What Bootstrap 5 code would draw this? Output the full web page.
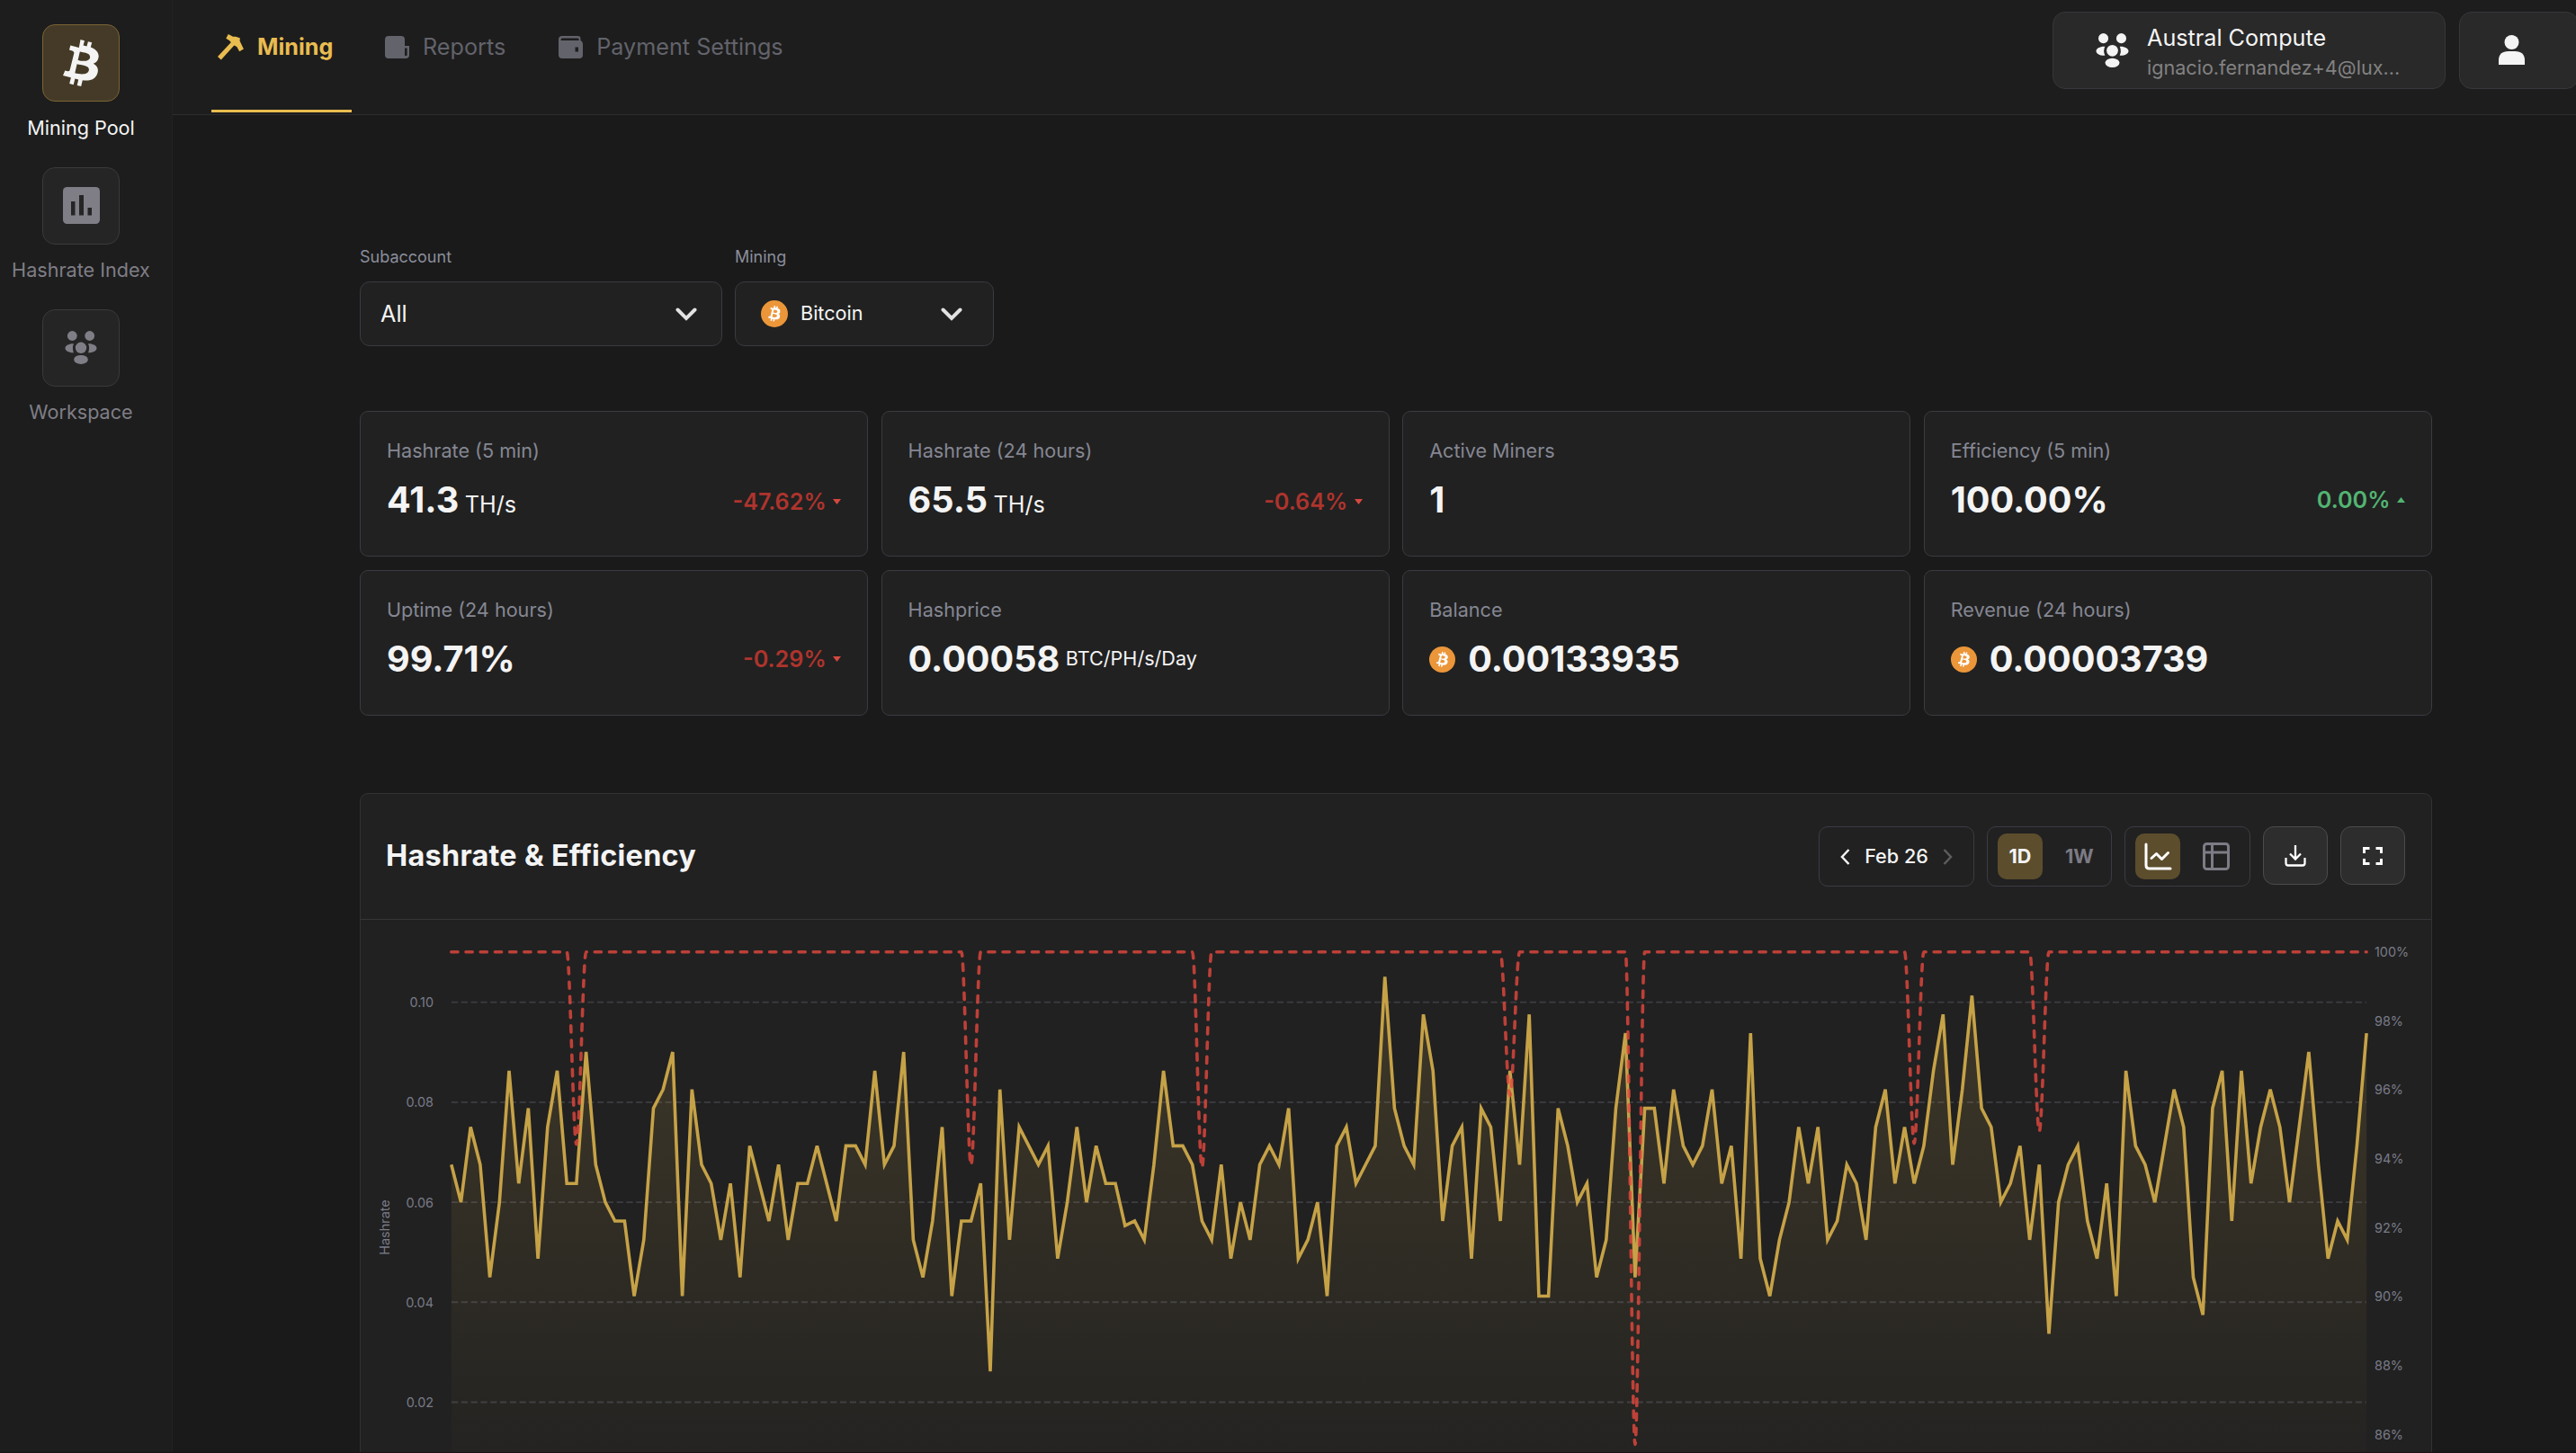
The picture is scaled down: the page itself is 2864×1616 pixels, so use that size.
<!DOCTYPE html>
<html lang="en" data-bs-theme="dark">
<head>
<meta charset="utf-8">
<title>Mining Pool</title>
<link href="https://cdn.jsdelivr.net/npm/bootstrap@5.3.0/dist/css/bootstrap.min.css" rel="stylesheet">
<style>
body{font-family:Inter,"Liberation Sans",sans-serif;background:#1a1a1a;color:#f4f4f4;width:2864px;height:1616px;overflow:hidden;font-size:21.6px;line-height:1.2}
body::after{content:"";position:absolute;left:0;right:0;top:1615px;height:1px;background:#1b1117}
svg{display:block;flex:none}
.rail{width:192px;height:1616px;background:#1d1d1d;border-right:1px solid #222224;padding-top:27.4px;flex:none}
.rail-item{width:180px;height:158.3px;color:#7f7e86;text-align:center;text-decoration:none;flex:none;white-space:nowrap}
.rail-tile{width:86px;height:86px;border:1px solid #3a3a3c;border-radius:14px;background:#252525;margin-bottom:16.5px}
.rail-item.active{color:#f4f4f4}
.rail-item.active .rail-tile{background:#443a27;border-color:#7b6434}
.topbar{height:128px;background:#1d1d1d;border-bottom:1px solid #2d2d2f}
.tabs-row{padding-left:43px}
.tab-link{color:#62636b;font-size:25.2px;height:125px;padding:0 22px 21px 37px;text-decoration:none;white-space:nowrap}
.tab-link svg{margin-right:15px}
.tab-link.active{color:#e9bc50;font-weight:700;border-bottom:3px solid #e9bc50;width:156px;padding:0 0 17px 7px}
.acct{background:#292929;border:1px solid #37373c;border-radius:14px;height:86px;margin-top:13px;flex:none}
.acct-team{width:437px;padding-left:47px;margin-right:15px}
.acct-user{width:133px;margin-right:-3px;padding:0 0 2px 43px}
.content-area{padding:147px 0 0 208px;width:2512px}
.flabel{font-size:18px;color:#8b8e9b;line-height:22px;margin-bottom:16px}
.pick-box{height:72px;background:#212121;border:1px solid #3a3a42;border-radius:10.8px}
.stat-grid{display:grid;grid-template-columns:repeat(4,1fr);column-gap:14.4px;row-gap:15px;margin-top:72px}
.stat{height:162px;background:#212121;border:1px solid #3a3a42;border-radius:9px;padding:30px 29px 0 29px}
.stat-name{color:#858793;line-height:27px;margin-bottom:17px}
.stat-val{font-size:39.6px;font-weight:700;line-height:48px}
.unit{font-size:25.2px}
.unit-gap{margin-left:6.5px}
.delta{font-size:25.2px;font-weight:600;color:#ae342d}
.delta svg{margin-left:7.5px}
.delta-up{color:#52b472}
.delta-drop{padding-top:4px}
.coin-gap{margin-right:14px}
.panel{margin-top:86px;background:#212121;border:1px solid #323234;border-radius:9px;height:740px}
.panel-head{height:140px;border-bottom:1px solid #363638;padding:36px 29px 0 28px}
.panel-title{font-size:32.4px;font-weight:700;line-height:66px;letter-spacing:.28px}
.seg{height:67px;border:1px solid #3c3b45;border-radius:10px;margin-right:14px}
.seg-on{background:#5c4d2d;border-radius:10px;width:50px;height:51px;flex:none}
.sq{width:72px;height:65px;border:1px solid #4b4b4b;border-radius:12px;background:#2d2d2d}
.axis{font-size:14.4px;fill:#797b88}
</style>
</head>
<body>
<svg width="0" height="0" class="position-absolute">
  <defs>
    <symbol id="btc" viewBox="0 0 40 53"><path fill="currentColor" fill-rule="evenodd" d="M19.5 0 24 1.200 22.600 6.400 26.500 7.400 27.900 2.200 32.200 3.200 30.800 8.600C36.500 10.800 40.300 14.500 39.600 19.500 39 23.500 37 25.800 33.800 26.800 38 29.200 39.800 32.500 38.500 37 36.800 43.800 30.500 46.500 21.800 45.300L20.200 52 15.700 51 17.200 44.400 13.400 43.500 11.700 50.200 7.200 49.100 8.900 42.200 0 40 2.300 34.500 5.400 35.200C6.800 35.500 7.400 34.800 7.700 33.800L12.300 15.300C12.500 13.900 12 12.900 10.300 12.400L7 11.500 8.300 6.500 17.800 8.900ZM18.800 13.600 16.600 22.900C21 24 28.800 25 30 20.200 31.200 15 23.200 14.700 18.800 13.600ZM15.600 27.300 13.300 37.300C18.500 38.600 27.500 39.900 28.800 34.300 30.100 28.900 20.800 28.500 15.600 27.300Z"/></symbol>
    <symbol id="coin" viewBox="0 0 29 29"><circle cx="14.500" cy="14.500" r="14.500" fill="#ec963a"/><svg x="7.600" y="5.600" width="13.500" height="17.500" viewBox="0 0 40 53" color="#fff"><use href="#btc"/></svg></symbol>
    <symbol id="team" viewBox="0 0 36 37"><g fill="currentColor"><circle cx="8.300" cy="5.500" r="5.400"/><circle cx="27.700" cy="5.500" r="5.400"/><circle cx="18" cy="18.800" r="6.200"/><ellipse cx="18" cy="31.900" rx="7.800" ry="5"/><path d="M10 14.300C4.500 14 .5 16.600.5 19.200S4 24.400 10 24.200Q7.800 19 10 14.300Z"/><path d="M26 14.300C31.500 14 35.500 16.600 35.500 19.200S32 24.400 26 24.200Q28.200 19 26 14.300Z"/></g></symbol>
  </defs>
</svg>
<div class="d-flex">
  <nav class="rail d-flex flex-column">
    <a class="rail-item active d-flex flex-column align-items-center"><span class="rail-tile d-flex align-items-center justify-content-center"><svg width="40" height="53"><use href="#btc"/></svg></span>Mining Pool</a>
    <a class="rail-item d-flex flex-column align-items-center"><span class="rail-tile d-flex align-items-center justify-content-center"><svg width="41" height="41"><rect width="41" height="41" rx="4.500" fill="currentColor"/><path d="M9 16h4.500v15.500H9zM18 9h5v22.500h-5zM27.500 23H32v8.500h-4.500z" fill="#252525"/></svg></span>Hashrate Index</a>
    <a class="rail-item d-flex flex-column align-items-center"><span class="rail-tile d-flex align-items-center justify-content-center"><svg width="36" height="37"><use href="#team"/></svg></span>Workspace</a>
  </nav>
  <div class="flex-grow-1">
    <header class="topbar d-flex">
      <div class="tabs-row d-flex">
        <a class="tab-link active d-flex align-items-center"><svg width="29" height="29" viewBox="0 0 29 29"><path fill="currentColor" d="M11.800 0 17 2.800C20 2.500 22 3.200 24.800 4.200L24.600 7.500 28.900 16.500 24.200 19.200 21.300 14 18.300 12.500 3.800 28.600 0 25 14.700 9.300C14 7.500 12.500 6.500 9.300 4.800Z"/></svg>Mining</a>
        <a class="tab-link d-flex align-items-center"><svg width="27" height="25" viewBox="0 0 27 25"><path fill="currentColor" fill-rule="evenodd" d="M4 0h14a4 4 0 0 1 4 4v7h5v10a4 4 0 0 1-4 4H4a4 4 0 0 1-4-4V4a4 4 0 0 1 4-4ZM22 13.500V21.500Q23 23 24.600 21.500V13.500Z"/></svg>Reports</a>
        <a class="tab-link d-flex align-items-center"><svg width="27" height="25" viewBox="0 0 27 25"><path fill="currentColor" fill-rule="evenodd" d="M4 0h17.500Q24.500 0 24.500 3V5Q27 6 27 8.500V21a4 4 0 0 1-4 4H4a4 4 0 0 1-4-4V4a4 4 0 0 1 4-4ZM3.500 2.500Q2.500 3.500 2.500 5H22.500V3.500Q22.500 2.500 21.500 2.500ZM18.500 12.500V17.500H22V12.500Z"/></svg>Payment Settings</a>
      </div>
      <div class="acct acct-team d-flex align-items-center ms-auto">
        <svg width="37" height="38" style="margin-right:20px"><use href="#team"/></svg>
        <div class="text-nowrap pt-1"><div style="font-size:25.2px;line-height:34px">Austral Compute</div><div style="color:#828282;line-height:33px">ignacio.fernandez+4@lux...</div></div>
      </div>
      <div class="acct acct-user d-flex align-items-center"><svg width="29" height="33" viewBox="0 0 29 33" fill="#f4f4f4"><circle cx="14.500" cy="8" r="8"/><path d="M0 33V28Q0 18 11 18H18Q29 18 29 28V33Z"/></svg></div>
    </header>
    <main class="content-area">
      <div class="d-flex" style="gap:14px">
        <div style="width:403px"><div class="flabel">Subaccount</div><div class="pick-box d-flex align-items-center justify-content-between" style="padding:0 27px 0 22px;font-size:25.2px">All<svg width="24" height="15" fill="none" stroke="#e2e2e2" stroke-width="4" stroke-linecap="round"><path d="m2.500 2.500 9.500 9.500 9.500-9.500"/></svg></div></div>
        <div style="width:288px"><div class="flabel">Mining</div><div class="pick-box d-flex align-items-center" style="padding:0 34px 0 28px"><svg width="30" height="30" class="coin-gap"><use href="#coin"/></svg>Bitcoin<svg class="ms-auto" width="24" height="15" fill="none" stroke="#e2e2e2" stroke-width="4" stroke-linecap="round"><path d="m2.500 2.500 9.500 9.500 9.500-9.500"/></svg></div></div>
      </div>
      <div class="stat-grid">
        <div class="stat"><div class="stat-name">Hashrate (5 min)</div><div class="d-flex align-items-center"><div class="d-flex align-items-baseline"><span class="stat-val">41.3</span><span class="unit unit-gap">TH/s</span></div><span class="delta delta-drop ms-auto d-flex align-items-center">-47.62%<svg width="9" height="6"><path d="M0 0h9L4.500 6z" fill="#d64840"/></svg></span></div></div>
        <div class="stat"><div class="stat-name">Hashrate (24 hours)</div><div class="d-flex align-items-center"><div class="d-flex align-items-baseline"><span class="stat-val">65.5</span><span class="unit unit-gap">TH/s</span></div><span class="delta delta-drop ms-auto d-flex align-items-center">-0.64%<svg width="9" height="6"><path d="M0 0h9L4.500 6z" fill="#d64840"/></svg></span></div></div>
        <div class="stat"><div class="stat-name">Active Miners</div><div class="stat-val">1</div></div>
        <div class="stat"><div class="stat-name">Efficiency (5 min)</div><div class="d-flex align-items-center"><span class="stat-val">100.00%</span><span class="delta delta-up ms-auto d-flex align-items-center">0.00%<svg width="9" height="6"><path d="M0 6h9L4.500 0z" fill="#52b472"/></svg></span></div></div>
        <div class="stat"><div class="stat-name">Uptime (24 hours)</div><div class="d-flex align-items-center"><span class="stat-val">99.71%</span><span class="delta ms-auto d-flex align-items-center">-0.29%<svg width="9" height="6"><path d="M0 0h9L4.500 6z" fill="#d64840"/></svg></span></div></div>
        <div class="stat"><div class="stat-name">Hashprice</div><div class="d-flex align-items-center"><span class="stat-val">0.00058</span><span class="unit-gap">BTC/PH/s/Day</span></div></div>
        <div class="stat"><div class="stat-name">Balance</div><div class="d-flex align-items-center"><svg width="29" height="29" class="coin-gap"><use href="#coin"/></svg><span class="stat-val">0.00133935</span></div></div>
        <div class="stat"><div class="stat-name">Revenue (24 hours)</div><div class="d-flex align-items-center"><svg width="29" height="29" class="coin-gap"><use href="#coin"/></svg><span class="stat-val">0.00003739</span></div></div>
      </div>
      <section class="panel">
        <div class="panel-head d-flex">
          <div class="panel-title me-auto">Hashrate &amp; Efficiency</div>
          <div class="seg d-flex align-items-center justify-content-between" style="width:173px;padding:0 23px;font-weight:500"><svg width="11" height="18" fill="none" stroke="#f4f4f4" stroke-width="2.500"><path d="M9.500 1 2 9l7.500 8"/></svg>Feb 26<svg width="11" height="18" fill="none" stroke="#5d5d60" stroke-width="2.500"><path d="m1.500 1 7.500 8-7.500 8"/></svg></div>
          <div class="seg d-flex align-items-center fw-bold" style="width:139px;padding-left:11px"><div class="seg-on d-flex align-items-center justify-content-center">1D</div><div style="padding-left:25px;color:#7d7b85">1W</div></div>
          <div class="seg d-flex align-items-center" style="width:140px;padding-left:11px"><div class="seg-on d-flex align-items-center justify-content-center"><svg width="31" height="31" fill="none" stroke="#fff" stroke-width="3" stroke-linecap="round" stroke-linejoin="round"><path d="M2 2V25.500Q2 29 5.500 29H29M8 17.500 13.500 12.500 19.500 18.500 26.500 11.500"/></svg></div><svg width="30" height="31" style="margin-left:25px" fill="none" stroke="#7d7b85" stroke-width="3"><rect x="1.500" y="1.500" width="27" height="28" rx="3"/><path d="M1.500 11H28.500M10.500 1.500V29.500"/></svg></div>
          <div class="sq d-flex align-items-center justify-content-center" style="margin-right:14px"><svg width="24" height="24" fill="none" stroke="#fff" stroke-width="2.300"><path d="M12 0V15M6 9.500 12 15.500 18 9.500M1.500 14V20Q1.500 22.500 4 22.500H20Q22.500 22.500 22.500 20V14"/></svg></div>
          <div class="sq d-flex align-items-center justify-content-center"><svg width="22" height="20" fill="none" stroke="#fff" stroke-width="3"><path d="M1.500 7V1.500H7.500M14.500 1.500H20.500V7M20.500 13V18.500H14.500M7.500 18.500H1.500V13"/></svg></div>
        </div>
        <svg id="plot" width="2302" height="593" viewBox="401 1023 2302 593">
          <defs><linearGradient id="fade" gradientUnits="userSpaceOnUse" x1="0" y1="1086" x2="0" y2="1671"><stop offset="0" stop-color="#e9bc50" stop-opacity=".15"/><stop offset="1" stop-color="#e9bc50" stop-opacity="0"/></linearGradient></defs>
        </svg>
      </section>
    </main>
  </div>
</div>
<script src="https://cdn.jsdelivr.net/npm/bootstrap@5.3.0/dist/js/bootstrap.bundle.min.js"></script>
<script>
// Hashrate samples in steps below the series maximum, one every interval of the day.
const steps = [10,12,8,10,16,12,5,11,7,15,8,5,11,11,4,10,12,13,13,17,14,7,6,4,17,6,10,11,14,11,16,9,11,13,10,14,11,11,9,11,13,9,9,10,5,10,9,
4,14,16,13,8,17,13,13,11,21,6,14,8,9,10,9,15,12,8,12,9,11,11,13.25,13,14,10,5,9,9,10,13,14,10,15,12,14,10,9,10,7,15,14,12,17,9,8,11,10,9,
0,7,9,10,2,5,13,9,8,15,7,8,13,5,10,2,17,17,7,9,12,11,16,14,7,3,16,7,7,11,6,9,10,9,6,11,9,15,3,15,17,14,12,8,11,8,14,13,10,11,14,8,6,
11,8,11,9,5,2,10,6,1,7,8,12,11,9,14,10,19,12,10,9,13,15,11,17,5,9,10,12,9,6,8,16,18,7,5,13,5,11,8,6,8,12,8,4,10,15,13,14,9,3];
// Efficiency dips: sample index -> percent.
const dips = {13:94.42,54:93.82,78:93.75,110:95.84,123:85.72,152:94.45,165:94.8};
const x0 = 501.8, dx = 10.7, X = i => x0 + i*dx;
const Y = s => 1086.4 + s*20.89, P = p => 1058.8 + (100-p)*38.35;
let out = '';
for (let k = 0; k < 5; k++) {
  const y = 1114.6 + k*111.22;
  out += `<path d="M502 ${y}H2631" stroke="#3c3c43" stroke-width="1.8" stroke-dasharray="7.2 3.6"/>`;
  out += `<text class="axis" x="482" y="${y+5.5}" text-anchor="end">${(0.10-k*0.02).toFixed(2)}</text>`;
}
for (let p = 100; p >= 86; p -= 2) out += `<text class="axis" x="2640" y="${P(p)+5}">${p}%</text>`;
out += '<text class="axis" text-anchor="middle" transform="translate(433 1365) rotate(-90)">Hashrate</text>';
const line = steps.map((s,i) => X(i).toFixed(1)+' '+Y(s).toFixed(1)).join('L');
out += `<path d="M${line}V1671H${x0}Z" fill="url(#fade)"/><path d="M${line}" fill="none" stroke="#c6a247" stroke-width="3.6"/>`;
let eff = `M${X(0)} ${P(100)}`;
for (const i of Object.keys(dips).map(Number)) {
  const t = P(100), b = P(dips[i]), c = dx/3;
  eff += `H${X(i-1)}C${X(i-1)+c} ${t} ${X(i)-c} ${b} ${X(i)} ${b}C${X(i)+c} ${b} ${X(i+1)-c} ${t} ${X(i+1)} ${t}`;
}
out += `<path d="${eff}H${X(199)}" fill="none" stroke="#e5483f" stroke-opacity=".8" stroke-width="3.6" stroke-linecap="round" stroke-dasharray="7.2 9"/>`;
document.getElementById('plot').insertAdjacentHTML('beforeend', out);
</script>
</body>
</html>
